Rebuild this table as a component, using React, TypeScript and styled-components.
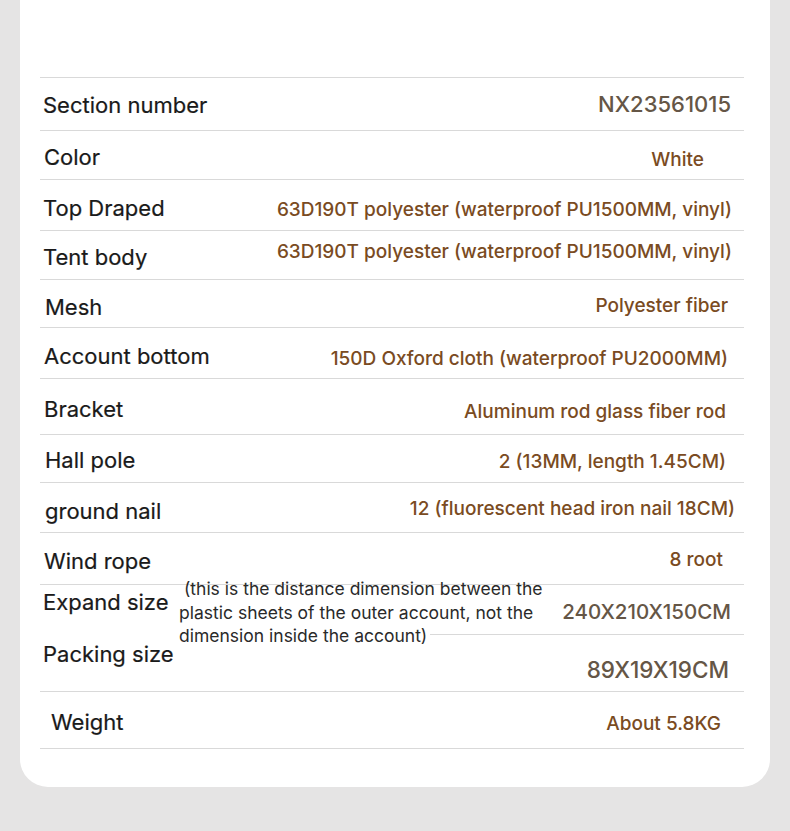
import React from 'react';
import styled, { createGlobalStyle } from 'styled-components';

// types
type Tone = 'brown' | 'gray';

interface Spec {
  label: string;
  value: string;
  tone: Tone;
  big?: boolean;
  h: number; // row height
  lx?: number; // label left inset
  ly?: number; // label vertical nudge
  vr: number; // value right inset
  vy?: number; // value vertical nudge
}

const specs: Spec[] = [
  { label: 'Section number', value: 'NX23561015', tone: 'gray', big: true, h: 53, lx: 3, ly: 1, vr: 13, vy: 0 },
  { label: 'Color', value: 'White', tone: 'brown', h: 49, lx: 4, ly: 2, vr: 40, vy: 4 },
  { label: 'Top Draped', value: '63D190T polyester (waterproof PU1500MM, vinyl)', tone: 'brown', h: 51, lx: 3, ly: 3, vr: 12, vy: 4 },
  { label: 'Tent body', value: '63D190T polyester (waterproof PU1500MM, vinyl)', tone: 'brown', h: 49, lx: 3, ly: 2, vr: 12, vy: -4 },
  { label: 'Mesh', value: 'Polyester fiber', tone: 'brown', h: 48, lx: 5, ly: 3, vr: 16, vy: 2 },
  { label: 'Account bottom', value: '150D Oxford cloth (waterproof PU2000MM)', tone: 'brown', h: 51, lx: 4, ly: 3, vr: 16, vy: 5 },
  { label: 'Bracket', value: 'Aluminum rod glass fiber rod', tone: 'brown', h: 56, lx: 4, ly: 2, vr: 18, vy: 5 },
  { label: 'Hall pole', value: '2 (13MM, length 1.45CM)', tone: 'brown', h: 48, lx: 5, ly: 1, vr: 18, vy: 3 },
  { label: 'ground nail', value: '12 (fluorescent head iron nail 18CM)', tone: 'brown', h: 50, lx: 5, ly: 3, vr: 9, vy: 1 },
  { label: 'Wind rope', value: '8 root', tone: 'brown', h: 52, lx: 4, ly: 2, vr: 21, vy: 1 },
];

const weight: Spec = { label: 'Weight', value: 'About 5.8KG', tone: 'brown', h: 57, lx: 11, ly: 2, vr: 23, vy: 3 };

// styles
const GlobalStyle = createGlobalStyle`
  body {
    margin: 0;
    background: #e5e4e4;
    font-family: Inter, "Noto Sans", sans-serif;
  }
`;

const Page = styled.div`
  padding: 0 20px 45px;
`;

const Card = styled.div`
  background: #ffffff;
  border-radius: 0 0 28px 28px;
  padding: 77px 26px 38px 20px;
`;

const Table = styled.div`
  border-top: 1px solid #d9d9d9;
`;

const Row = styled.div<{ $h: number }>`
  height: ${(p) => p.$h}px;
  box-sizing: border-box;
  border-bottom: 1px solid #d9d9d9;
  display: flex;
  align-items: center;
  justify-content: space-between;
`;

const Label = styled.div<{ $x?: number; $y?: number }>`
  padding-left: ${(p) => p.$x ?? 3}px;
  margin-top: ${(p) => (p.$y ?? 0) * 2}px;
  font-size: 22px;
  color: #1a1a1a;
  -webkit-text-stroke: 0.2px #1a1a1a;
  white-space: nowrap;
`;

const Value = styled.div<{ $tone: Tone; $big?: boolean; $r: number; $y?: number }>`
  padding-right: ${(p) => p.$r}px;
  margin-top: ${(p) => (p.$y ?? 0) * 2}px;
  font-size: ${(p) => (p.$big ? 22 : 19)}px;
  font-weight: 500;
  color: ${(p) => (p.$tone === 'gray' ? '#655646' : '#7a4b22')};
  white-space: nowrap;
  text-align: right;
`;

const SizeBlock = styled.div`
  display: grid;
  grid-template-columns: 139px 1fr 314px;
  grid-template-rows: 50px 56px;
  border-bottom: 1px solid #d9d9d9;
`;

const SizeLabel = styled(Label)<{ $row: number; $top: number }>`
  grid-column: 1;
  grid-row: ${(p) => p.$row};
  align-self: start;
  margin-top: 0;
  padding-top: ${(p) => p.$top}px;
`;

const Note = styled.div`
  grid-column: 2 / 4;
  grid-row: 1 / 3;
  align-self: start;
  margin-top: -8px;
  max-width: 370px;
  font-size: 17.5px;
  line-height: 23.5px;
  color: #2a2a2a;
  z-index: 1;
  white-space: pre;
`;

const SizeValue = styled(Value)<{ $row: number; $line?: boolean; $fs: number }>`
  grid-column: 3;
  grid-row: ${(p) => p.$row};
  display: flex;
  align-items: center;
  justify-content: flex-end;
  margin-top: 0;
  padding-top: ${(p) => (p.$y ?? 0) * 2}px;
  font-size: ${(p) => p.$fs}px;
  border-bottom: ${(p) => (p.$line ? '1px solid #d9d9d9' : 'none')};
  box-sizing: border-box;
`;

function SpecRow({ s }: { s: Spec }) {
  return (
    <Row $h={s.h}>
      <Label $x={s.lx} $y={s.ly}>{s.label}</Label>
      <Value $tone={s.tone} $big={s.big} $r={s.vr} $y={s.vy}>
        {s.value}
      </Value>
    </Row>
  );
}

function App() {
  return (
    <Page>
      <GlobalStyle />
      <Card>
        <Table>
          {specs.map((s) => (
            <SpecRow key={s.label} s={s} />
          ))}
          <SizeBlock>
            <SizeLabel $row={1} $x={3} $top={4}>Expand size</SizeLabel>
            <SizeLabel $row={2} $x={3} $top={6}>Packing size</SizeLabel>
            <Note>
              {' (this is the distance dimension between the\nplastic sheets of the outer account, not the\ndimension inside the account)'}
            </Note>
            <SizeValue $row={1} $tone="gray" $fs={20.5} $r={13} $y={2} $line>
              240X210X150CM
            </SizeValue>
            <SizeValue $row={2} $tone="gray" $fs={22.5} $r={15} $y={6}>
              89X19X19CM
            </SizeValue>
          </SizeBlock>
          <SpecRow s={weight} />
        </Table>
      </Card>
    </Page>
  );
}

export default App;
